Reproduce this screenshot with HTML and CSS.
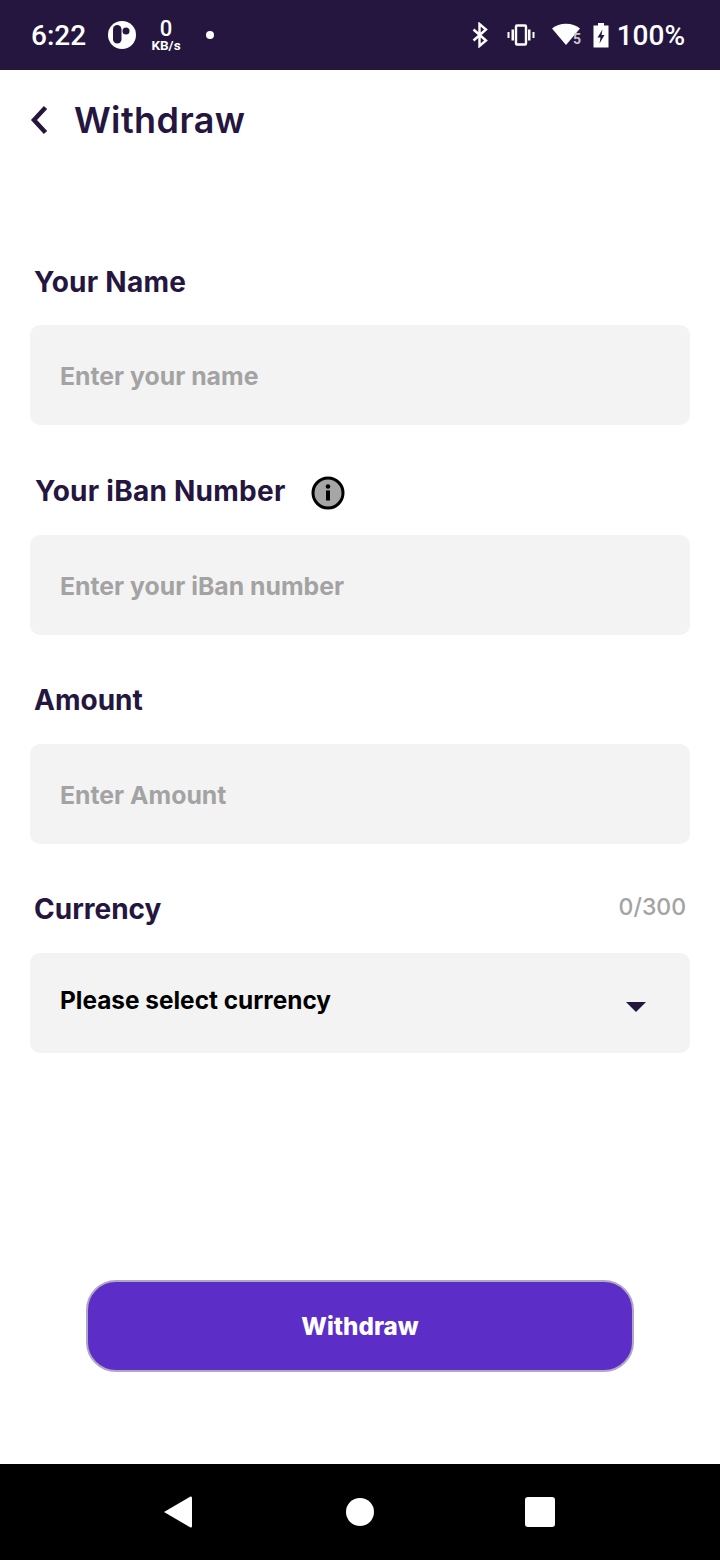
FILE: index.html
```html
<!DOCTYPE html>
<html lang="en">
<head>
<meta charset="utf-8">
<title>Withdraw</title>
<link rel="stylesheet" href="styles.css">
</head>
<body>
<div class="screen">
  <div class="status">
    <span class="time">6:22</span>
    <svg class="app-icon" width="28" height="28" viewBox="0 0 28 28"><circle cx="14" cy="14" r="14" fill="#fff"/><rect x="5" y="4" width="8.500" height="18.500" rx="4.250" fill="#25163f"/><circle cx="18" cy="10" r="3.500" fill="#25163f"/></svg>
    <div class="speed"><span class="speed-num">0</span><span class="speed-unit">KB/s</span></div>
    <span class="dot"></span>
    <span class="status-spacer"></span>
    <svg class="ic-bt" width="18" height="26" viewBox="0 0 18 26"><path d="M2.500 7.500 L15 18.500 L8.500 24 V2 L15 7.500 L2.500 18.500" fill="none" stroke="#fff" stroke-width="2.400"/></svg>
    <svg class="ic-vib" width="28" height="22" viewBox="0 0 28 22"><rect x="9" y="1.500" width="10" height="19" rx="1" fill="none" stroke="#fff" stroke-width="2.400"/><path d="M4.500 5.500h2.500v11h-2.500zM21 5.500h2.500v11h-2.500zM0.500 8h2v6h-2zM25.500 8h2v6h-2z" fill="#fff"/></svg>
    <svg class="ic-wifi" width="32" height="26" viewBox="0 0 32 26"><path d="M0 6.500 C7 0 21 0 28 6.500 L14 23 Z" fill="#fff"/><text class="wifi-five" x="21" y="22">5</text></svg>
    <svg class="ic-batt" width="16" height="26" viewBox="0 0 16 26"><path d="M5 1h6v2.500h4.500v22h-15v-22h4.500z" fill="#fff"/><path d="M9.500 7.500 L4.500 15.500h3l-1 6 5-8.500h-3z" fill="#25163f"/></svg>
    <span class="pct">100%</span>
  </div>

  <div class="header">
    <svg class="back" width="20" height="30" viewBox="0 0 20 30"><path d="M16.500 2.500 L5 15 L16.500 27.500" fill="none" stroke="#25163f" stroke-width="4.500"/></svg>
    <h1 class="title">Withdraw</h1>
  </div>

  <main class="form">
    <div class="group">
      <div class="label-row"><span class="label">Your Name</span></div>
      <div class="field"><span class="placeholder">Enter your name</span></div>
    </div>
    <div class="group">
      <div class="label-row label-row-info"><span class="label label-iban">Your iBan Number</span>
        <svg class="info" width="34" height="34" viewBox="0 0 34 34"><circle cx="17" cy="17" r="15" fill="#a6a6a6" stroke="#000" stroke-width="3"/><rect x="15" y="14.500" width="4" height="10" fill="#000"/><circle cx="17" cy="10.500" r="2.300" fill="#000"/></svg>
      </div>
      <div class="field"><span class="placeholder">Enter your iBan number</span></div>
    </div>
    <div class="group">
      <div class="label-row"><span class="label label-tight">Amount</span></div>
      <div class="field"><span class="placeholder">Enter Amount</span></div>
    </div>
    <div class="group">
      <div class="label-row"><span class="label label-tight">Currency</span><span class="counter">0/300</span></div>
      <div class="field field-select"><span class="select-text">Please select currency</span><span class="caret"></span></div>
    </div>
  </main>

  <div class="action"><button class="submit" type="button">Withdraw</button></div>

  <div class="nav">
    <svg width="28" height="34" viewBox="1 0 28 34"><path d="M1 17 L27.500 1.500 Q29 1 29 3 V31 Q29 33 27.500 32.500 Z" fill="#fff"/></svg>
    <svg class="nav-home" width="28" height="28" viewBox="0 0 28 28"><circle cx="14" cy="14" r="14" fill="#fff"/></svg>
    <span class="nav-square"></span>
  </div>
</div>
</body>
</html>
```
FILE: styles.css
```css
* { box-sizing: border-box; }
html, body { margin: 0; padding: 0; }
body { font-family: "Inter", "Liberation Sans", sans-serif; background: #fff; }
.screen { width: 720px; height: 1560px; display: flex; flex-direction: column; overflow: hidden; }

.status { height: 70px; flex: none; background: #25163f; color: #fff; display: flex; align-items: center; padding: 0 35px 0 31px; font-family: Roboto, sans-serif; }
.time { font-size: 28px; font-weight: 500; width: 55px; }
.app-icon { margin-left: 22px; }
.speed { display: flex; flex-direction: column; align-items: center; margin-left: 15px; width: 30px; line-height: 1; }
.speed-num { font-size: 22px; font-weight: 500; height: 20px; line-height: 20px; }
.speed-unit { font-size: 13.500px; font-weight: 700; line-height: 13px; }
.dot { width: 8px; height: 8px; border-radius: 50%; background: #fff; margin-left: 25px; }
.status-spacer { flex: 1; }
.ic-bt { margin-right: 18px; }
.ic-vib { margin-right: 17px; }
.ic-wifi { margin-right: 9px; }
.wifi-five { font-size: 14px; font-weight: 700; fill: #c9c6d0; font-family: Roboto, sans-serif; }
.ic-batt { margin-right: 8px; }
.pct { font-size: 28px; font-weight: 500; }

.header { height: 100px; flex: none; display: flex; align-items: center; padding-left: 29px; }
.back { flex: none; }
.title { margin: 0 0 0 25px; font-size: 36px; font-weight: 600; letter-spacing: 0.400px; color: #25163f; line-height: 1; }

.form { flex: none; padding: 90px 30px 0; display: flex; flex-direction: column; gap: 44px; }
.label-row { height: 65px; display: flex; align-items: flex-start; justify-content: space-between; padding: 0 4px; }
.label-row-info { height: 66px; justify-content: flex-start; }
.label { font-size: 28px; font-weight: 700; letter-spacing: 0.250px; color: #25163f; line-height: 44px; }
.label-iban { margin-left: 1px; }
.label-tight { line-height: 42px; letter-spacing: 0; }
.info { margin-left: 25px; margin-top: 7px; }
.counter { font-size: 23px; font-weight: 500; color: #a3a3a3; line-height: 38px; }
.field { height: 100px; background: #f3f3f3; border-radius: 10px; display: flex; align-items: center; justify-content: space-between; padding: 0 44px 0 30px; }
.placeholder { font-size: 24.800px; font-weight: 700; color: #a3a3a3; margin-top: 2px; }
.select-text { font-size: 24.400px; font-weight: 700; color: #000; margin-bottom: 6px; }
.caret { width: 0; height: 0; border-left: 10px solid transparent; border-right: 10px solid transparent; border-top: 10px solid #25163f; margin-top: 8px; }

.action { flex: 1; display: flex; justify-content: center; align-items: flex-start; padding-top: 227px; }
.submit { width: 548px; height: 92px; border-radius: 30px; background: #5c2dc7; border: 2px solid #b0a6c6; color: #fff; font-family: inherit; font-size: 24.200px; font-weight: 800; padding-top: 2px; }

.nav { height: 96px; flex: none; background: #000; display: flex; align-items: center; justify-content: space-between; padding: 0 165px 0 164px; }
.nav-home { margin-left: 3px; }
.nav-square { width: 30px; height: 30px; background: #fff; border-radius: 3px; }
```
